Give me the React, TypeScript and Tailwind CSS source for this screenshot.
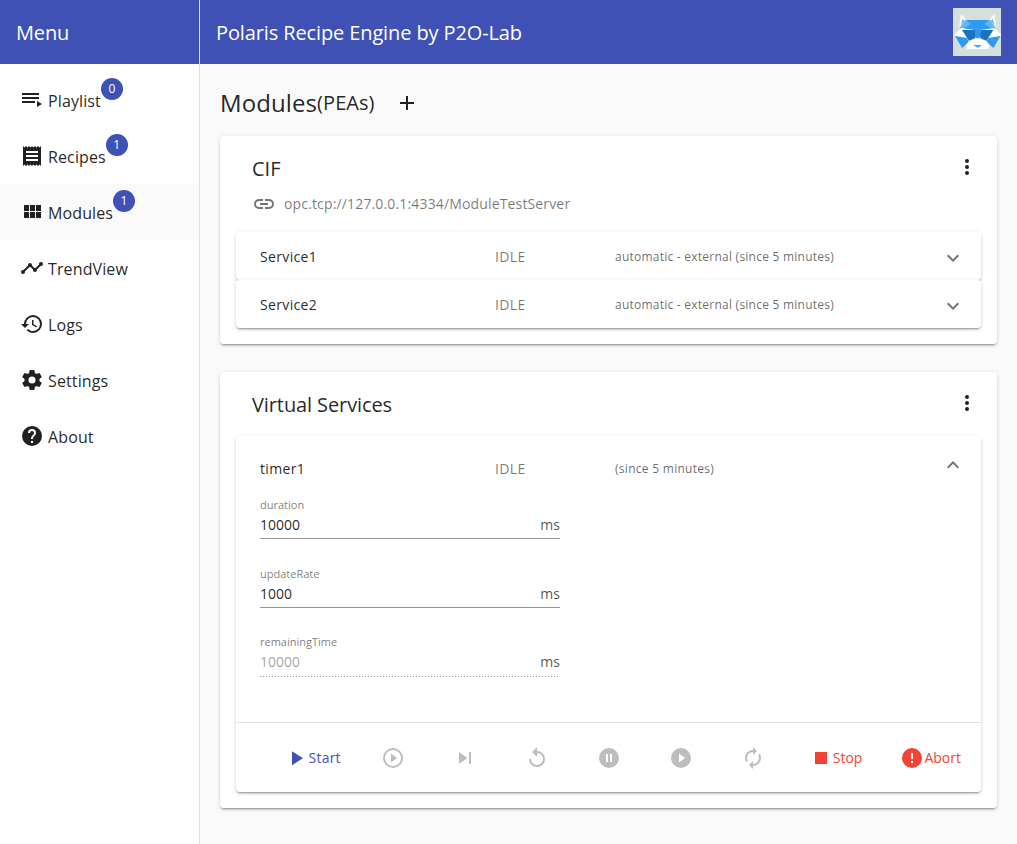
import React from "react";

const P = {
  playlist: "M19,9H2V11H19V9M19,5H2V7H19V5M2,15H15V13H2V15M17,13V19L22,16L17,13Z",
  receipt: "M3,22L4.5,20.5L6,22L7.5,20.5L9,22L10.5,20.5L12,22L13.5,20.5L15,22L16.5,20.5L18,22L19.5,20.5L21,22V2L19.5,3.5L18,2L16.5,3.5L15,2L13.5,3.5L12,2L10.5,3.5L9,2L7.5,3.5L6,2L4.5,3.5L3,2M18,9H6V7H18M18,13H6V11H18M18,17H6V15H18V17Z",
  modules: "M16,5V11H21V5M10,11H15V5H10M16,18H21V12H16M10,18H15V12H10M4,18H9V12H4M4,11H9V5H4V11Z",
  timeline: "M23 8c0 1.1-.9 2-2 2-.18 0-.35-.02-.51-.07l-3.56 3.55c.05.16.07.34.07.52 0 1.1-.9 2-2 2s-2-.9-2-2c0-.18.02-.36.07-.52l-2.55-2.55c-.16.05-.34.07-.52.07s-.36-.02-.52-.07l-4.55 4.56c.05.16.07.33.07.51 0 1.1-.9 2-2 2s-2-.9-2-2 .9-2 2-2c.18 0 .35.02.51.07l4.56-4.55C8.02 9.36 8 9.18 8 9c0-1.1.9-2 2-2s2 .9 2 2c0 .18-.02.36-.07.52l2.55 2.55c.16-.05.34-.07.52-.07s.36.02.52.07l3.55-3.56C19.02 8.35 19 8.18 19 8c0-1.1.9-2 2-2s2 .9 2 2z",
  history: "M13.5,8H12V13L16.28,15.54L17,14.33L13.5,12.25V8M13,3A9,9 0 0,0 4,12H1L4.96,16.03L9,12H6A7,7 0 0,1 13,5A7,7 0 0,1 20,12A7,7 0 0,1 13,19C11.07,19 9.32,18.21 8.06,16.94L6.64,18.36C8.27,20 10.5,21 13,21A9,9 0 0,0 22,12A9,9 0 0,0 13,3",
  cog: "M12,15.5A3.5,3.5 0 0,1 8.5,12A3.5,3.5 0 0,1 12,8.5A3.5,3.5 0 0,1 15.5,12A3.5,3.5 0 0,1 12,15.5M19.43,12.97C19.47,12.65 19.5,12.33 19.5,12C19.5,11.67 19.47,11.34 19.43,11L21.54,9.37C21.73,9.22 21.78,8.95 21.66,8.73L19.66,5.27C19.54,5.05 19.27,4.96 19.05,5.05L16.56,6.05C16.04,5.66 15.5,5.32 14.87,5.07L14.5,2.42C14.46,2.18 14.25,2 14,2H10C9.75,2 9.54,2.18 9.5,2.42L9.13,5.07C8.5,5.32 7.96,5.66 7.44,6.05L4.95,5.05C4.73,4.96 4.46,5.05 4.34,5.27L2.34,8.73C2.21,8.95 2.27,9.22 2.46,9.37L4.57,11C4.53,11.34 4.5,11.67 4.5,12C4.5,12.33 4.53,12.65 4.57,12.97L2.46,14.63C2.27,14.78 2.21,15.05 2.34,15.27L4.34,18.73C4.46,18.95 4.73,19.03 4.95,18.95L7.44,17.94C7.96,18.34 8.5,18.68 9.13,18.93L9.5,21.58C9.54,21.82 9.75,22 10,22H14C14.25,22 14.46,21.82 14.5,21.58L14.87,18.93C15.5,18.67 16.04,18.34 16.56,17.94L19.05,18.95C19.27,19.03 19.54,18.95 19.66,18.73L21.66,15.27C21.78,15.05 21.73,14.78 21.54,14.63L19.43,12.97Z",
  help: "M15.07,11.25L14.17,12.17C13.45,12.89 13,13.5 13,15H11V14.5C11,13.39 11.45,12.39 12.17,11.67L13.41,10.41C13.78,10.05 14,9.55 14,9C14,7.89 13.1,7 12,7A2,2 0 0,0 10,9H8A4,4 0 0,1 12,5A4,4 0 0,1 16,9C16,9.88 15.64,10.67 15.07,11.25M13,19H11V17H13M12,2A10,10 0 0,0 2,12A10,10 0 0,0 12,22A10,10 0 0,0 22,12C22,6.47 17.5,2 12,2Z",
  link: "M3.9,12C3.9,10.29 5.29,8.9 7,8.9H11V7H7A5,5 0 0,0 2,12A5,5 0 0,0 7,17H11V15.1H7C5.29,15.1 3.9,13.71 3.9,12M8,13H16V11H8V13M17,7H13V8.9H17C18.71,8.9 20.1,10.29 20.1,12C20.1,13.71 18.71,15.1 17,15.1H13V17H17A5,5 0 0,0 22,12A5,5 0 0,0 17,7Z",
  dots: "M12,16A2,2 0 0,1 14,18A2,2 0 0,1 12,20A2,2 0 0,1 10,18A2,2 0 0,1 12,16M12,10A2,2 0 0,1 14,12A2,2 0 0,1 12,14A2,2 0 0,1 10,12A2,2 0 0,1 12,10M12,4A2,2 0 0,1 14,6A2,2 0 0,1 12,8A2,2 0 0,1 10,6A2,2 0 0,1 12,4Z",
  plus: "M19,13H13V19H11V13H5V11H11V5H13V11H19V13Z",
  down: "M7.41,8.58L12,13.17L16.59,8.58L18,10L12,16L6,10L7.41,8.58Z",
  up: "M7.41,15.41L12,10.83L16.59,15.41L18,14L12,8L6,14L7.41,15.41Z",
  play: "M8,5.14V19.14L19,12.14L8,5.14Z",
  playOutline: "M10,16.5L16,12L10,7.5V16.5M12,2A10,10 0 0,0 2,12A10,10 0 0,0 12,22A10,10 0 0,0 22,12A10,10 0 0,0 12,2M12,20C7.59,20 4,16.41 4,12C4,7.59 7.59,4 12,4C16.41,4 20,7.59 20,12C20,16.41 16.41,20 12,20Z",
  skip: "M16,18H18V6H16M6,18L14.5,12L6,6V18Z",
  replay: "M12,5V1L7,6L12,11V7A6,6 0 0,1 18,13A6,6 0 0,1 12,19A6,6 0 0,1 6,13H4A8,8 0 0,0 12,21A8,8 0 0,0 20,13A8,8 0 0,0 12,5Z",
  pause: "M15,16H13V8H15M11,16H9V8H11M12,2A10,10 0 0,0 2,12A10,10 0 0,0 12,22A10,10 0 0,0 22,12A10,10 0 0,0 12,2Z",
  playCircle: "M10,16.5V7.5L16,12M12,2A10,10 0 0,0 2,12A10,10 0 0,0 12,22A10,10 0 0,0 22,12A10,10 0 0,0 12,2Z",
  renew: "M12,6V9L16,5L12,1V4A8,8 0 0,0 4,12C4,13.57 4.46,15.03 5.24,16.26L6.7,14.8C6.25,13.97 6,13 6,12A6,6 0 0,1 12,6M18.76,7.74L17.3,9.2C17.74,10.04 18,11 18,12A6,6 0 0,1 12,18V15L8,19L12,23V20A8,8 0 0,0 20,12C20,10.43 19.54,8.97 18.76,7.74Z",
  stop: "M18,18H6V6H18V18Z",
  alert: "M13,13H11V7H13M13,17H11V15H13M12,2A10,10 0 0,0 2,12A10,10 0 0,0 12,22A10,10 0 0,0 22,12A10,10 0 0,0 12,2Z",
};

function Icon({ d, className = "" }: { d: string; className?: string }) {
  return (
    <svg viewBox="0 0 24 24" className={"w-6 h-6 shrink-0 fill-current " + className}>
      <path d={d} />
    </svg>
  );
}

function Logo() {
  const half = (
    <>
      <polygon points="8,6 6,19 13,12" fill="#ffffff" />
      <polygon points="9.5,11 8,17 12,13" fill="#64b5f6" />
      <polygon points="13,12 25,12 25,31 7,20" fill="#2f9bf0" />
      <polygon points="7,20 13,12 18,16 10,21" fill="#64b5f6" />
      <polygon points="1,27 8,20 22,22 22,25 16,33 2,28" fill="#ffffff" />
      <polygon points="9,22 22,22 22,30 16,33" fill="#1b72c0" />
      <polygon points="2,28 14,30 16,34 9,40" fill="#2f9bf0" />
      <polygon points="16,33 25,30 25,41 14,41 13,37" fill="#ffffff" />
      <polygon points="20.5,37 25,37 25,40" fill="#2f9bf0" />
    </>
  );
  return (
    <svg viewBox="0 0 48 48" className="w-12 h-12 bg-[#d5dfdc]">
      {half}
      <g transform="translate(49.4 0) scale(-1 1)">{half}</g>
    </svg>
  );
}

const nav = [
  { label: "Playlist", icon: P.playlist, badge: "0" },
  { label: "Recipes", icon: P.receipt, badge: "1" },
  { label: "Modules", icon: P.modules, badge: "1", active: true },
  { label: "TrendView", icon: P.timeline },
  { label: "Logs", icon: P.history },
  { label: "Settings", icon: P.cog },
  { label: "About", icon: P.help },
];

const cardShadow = "shadow-[0_3px_1px_-2px_rgba(0,0,0,0.2),0_2px_2px_0_rgba(0,0,0,0.14),0_1px_5px_0_rgba(0,0,0,0.12)]";

function ServiceRow({ name }: { name: string }) {
  return (
    <div className={"relative h-12 flex items-center bg-white rounded-[4px] pl-6 pr-4 text-sm text-black/87 " + cardShadow}>
      <span className="w-[235px] pt-[2px] tracking-[0.35px]">{name}</span>
      <span className="w-[120px] pt-[2px] tracking-[0.35px] text-black/54">IDLE</span>
      <span className="flex-1 pt-[2px] text-xs tracking-[0.24px] text-black/60">automatic - external (since 5 minutes)</span>
      <Icon d={P.down} className="text-black/54 mt-1" />
    </div>
  );
}

function Field({ label, value, disabled }: { label: string; value: string; disabled?: boolean }) {
  return (
    <div className={"w-[300px] h-[69px] " + (disabled ? "-mt-px" : "")}>
      <div className="h-[15px] text-[11px] leading-[15px] text-black/54">{label}</div>
      <div className="h-[26px] flex items-center justify-between text-sm">
        <span className={disabled ? "text-black/38" : "text-black/87"}>{value}</span>
        <span className="text-black/70">ms</span>
      </div>
      {disabled ? (
        <div className="h-px mt-px bg-[linear-gradient(to_right,rgba(0,0,0,0.42)_0,rgba(0,0,0,0.42)_1px,transparent_1px)] bg-[length:3px_1px] bg-repeat-x" />
      ) : (
        <div className="h-px bg-black/42" />
      )}
    </div>
  );
}

function IconButton({ d }: { d: string }) {
  return (
    <div className="w-16 h-9 flex items-center justify-center text-black/26">
      <Icon d={d} />
    </div>
  );
}

function TextButton({ d, label, className, labelClass = "" }: { d: string; label: string; className: string; labelClass?: string }) {
  return (
    <div className={"h-9 flex items-center text-sm " + className}>
      <Icon d={d} />
      <span className={labelClass}>{label}</span>
    </div>
  );
}

export default function App() {
  return (
    <div className="h-screen flex overflow-hidden bg-[#fafafa] font-['Open_Sans',sans-serif] text-black/87">
      <aside className="w-[200px] shrink-0 bg-white border-r border-black/12">
        <div className="h-16 bg-[#3f51b5] flex items-center pl-4 pt-[2px] text-white text-xl tracking-[-0.12px]">Menu</div>
        <nav className="py-2">
          {nav.map((n) => (
            <div key={n.label} className={"h-14 flex items-center pl-5 text-base tracking-[0.12px] " + (n.active ? "bg-[#fafafa]" : "")}>
              <Icon d={n.icon} className="mr-1 text-black/87" />
              <span className="relative pt-[2px]">
                {n.label}
                {n.badge && (
                  <span className="absolute left-full -top-[9px] w-[22px] h-[22px] rounded-full bg-[#3f51b5] text-white text-xs flex items-center justify-center">
                    {n.badge}
                  </span>
                )}
              </span>
            </div>
          ))}
        </nav>
      </aside>
      <div className="flex-1 min-w-0 flex flex-col">
        <header className="h-16 shrink-0 bg-[#3f51b5] flex items-center justify-between pl-4 pr-4 text-white text-xl">
          <span className="pt-[2px] tracking-[-0.12px]">Polaris Recipe Engine by P2O-Lab</span>
          <Logo />
        </header>
        <main className="px-5">
          <div className="h-[72px] flex items-center pt-[6px]">
            <span className="text-2xl tracking-[0.1px]">Modules</span>
            <span className="text-xl tracking-[0.05px]">(PEAs)</span>
            <Icon d={P.plus} className="ml-5" />
          </div>
          <section className={"bg-white rounded-[4px] px-4 pb-4 h-[208px] " + cardShadow}>
            <div className="h-[64px] flex items-center justify-between pl-4 pr-[2px]">
              <span className="text-xl pt-[2px]">CIF</span>
              <Icon d={P.dots} className="-mt-[2px]" />
            </div>
            <div className="h-8 flex items-center pl-[16px] text-sm tracking-[0.15px] text-black/54 -mt-[12px]">
              <Icon d={P.link} className="mr-2" />
              opc.tcp://127.0.0.1:4334/ModuleTestServer
            </div>
            <div className="mt-[12px]">
              <ServiceRow name="Service1" />
              <ServiceRow name="Service2" />
            </div>
          </section>
          <section className={"mt-7 bg-white rounded-[4px] px-4 pb-4 h-[436px] " + cardShadow}>
            <div className="h-[64px] flex items-center justify-between pl-4 pr-[2px]">
              <span className="text-xl pt-[2px] tracking-[-0.1px]">Virtual Services</span>
              <Icon d={P.dots} className="-mt-[2px]" />
            </div>
            <div className={"bg-white rounded-[4px] h-[356px] flex flex-col " + cardShadow}>
              <div className="h-[62px] flex items-center pl-6 pr-4 text-sm shrink-0 pt-[3px]">
                <span className="w-[235px] tracking-[0.35px]">timer1</span>
                <span className="w-[120px] tracking-[0.35px] text-black/54">IDLE</span>
                <span className="flex-1 text-xs tracking-[0.28px] text-black/60">(since 5 minutes)</span>
                <Icon d={P.up} className="text-black/54 -mt-2" />
              </div>
              <div className="flex-1 pl-6 -mt-px">
                <Field label="duration" value="10000" />
                <Field label="updateRate" value="1000" />
                <Field label="remainingTime" value="10000" disabled />
              </div>
              <div className="h-[70px] shrink-0 border-t border-black/12 flex items-center justify-end pr-5 gap-2">
                <TextButton d={P.play} label="Start" className="text-[#3f51b5] mr-[12px] tracking-[0.2px]" labelClass="ml-px" />
                <IconButton d={P.playOutline} />
                <IconButton d={P.skip} />
                <IconButton d={P.replay} />
                <IconButton d={P.pause} />
                <IconButton d={P.playCircle} />
                <IconButton d={P.renew} />
                <TextButton d={P.stop} label="Stop" className="text-[#f44336] ml-[16px]" />
                <TextButton d={P.alert} label="Abort" className="text-[#f44336] ml-[30px]" />
              </div>
            </div>
          </section>
        </main>
      </div>
    </div>
  );
}
